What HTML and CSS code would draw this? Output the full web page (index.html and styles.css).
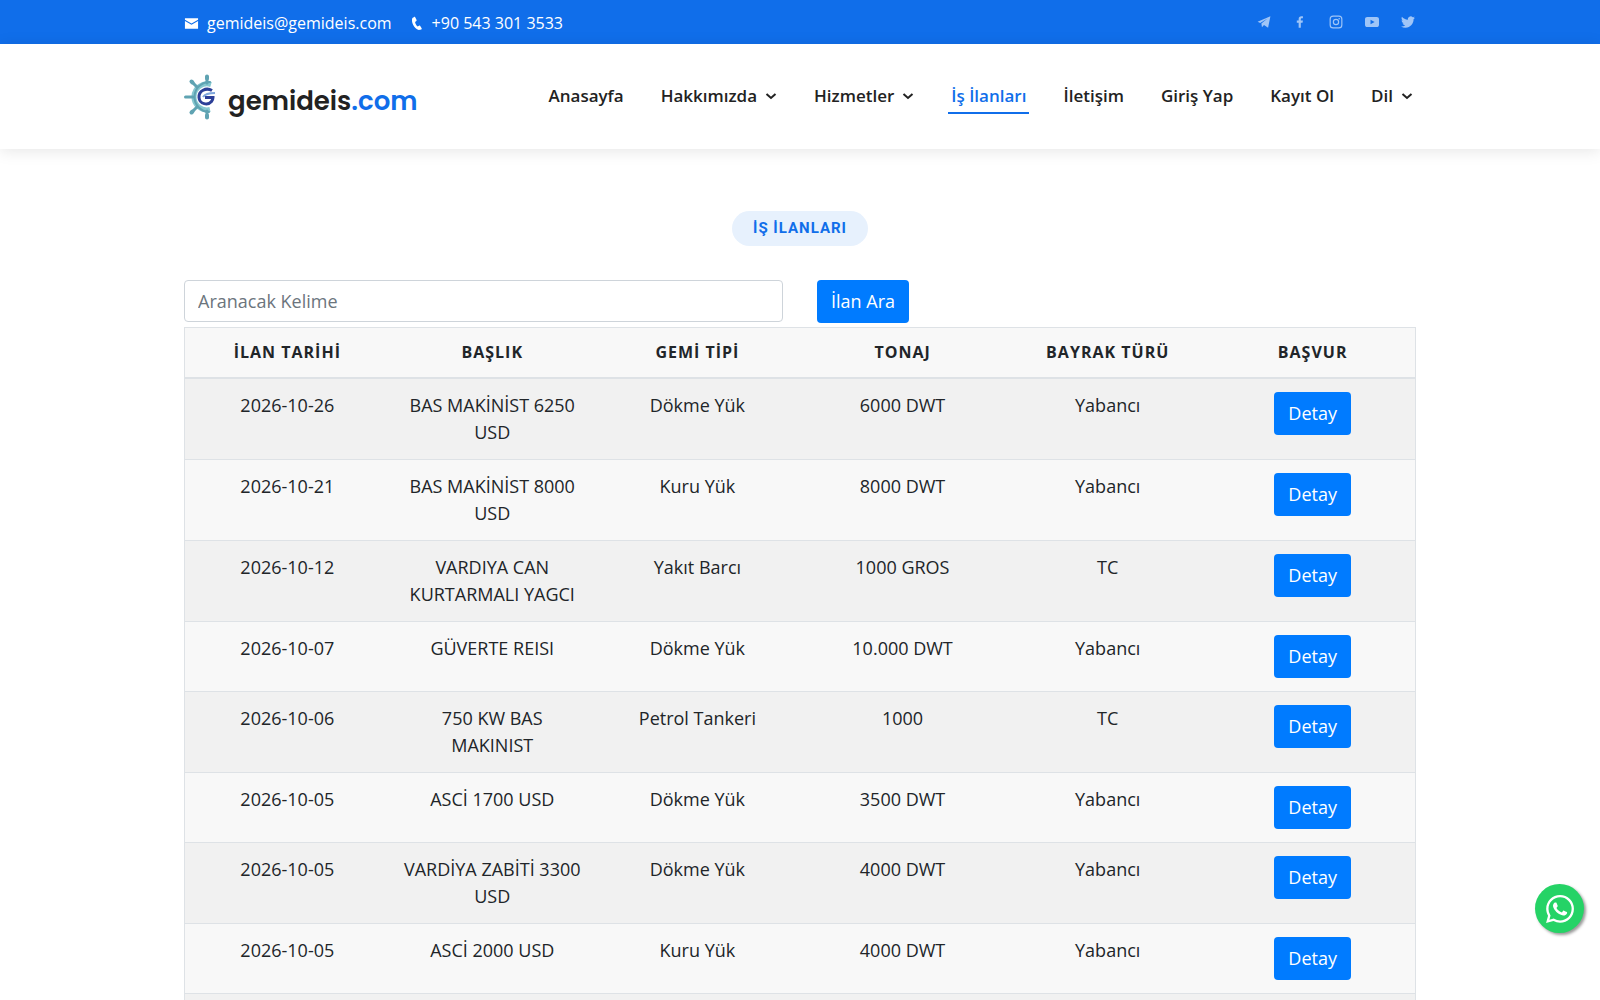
FILE: index.html
```html
<!DOCTYPE html>
<html lang="tr">
<head>
<meta charset="utf-8">
<meta name="viewport" content="width=device-width, initial-scale=1">
<title>İş İlanları</title>
<link rel="stylesheet" href="styles.css">
</head>
<body>
<div class="topbar">
  <div class="container topbar-inner">
    <div class="contact">
      <a href="mailto:gemideis@gemideis.com"><svg class="contact-icon" viewBox="0 0 16 16"><path d="M1 2.500h14v1.500L8 8 1 4zM1 5.300l7 4 7-4v8.200H1z"/></svg>gemideis@gemideis.com</a>
      <a href="tel:+905433013533"><svg class="contact-icon" viewBox="0 0 16 16"><path d="M5.500 1 3.600 2C2 6 5 13 10.500 15l2.600-.7c.5-.3.600-.7.400-1.200l-1.700-2.600c-.3-.4-.7-.4-1.100-.2l-1.600.8C7.600 9.600 6.700 8 6.500 6.300l1.300-1.100c.3-.3.400-.6.300-1L6.600 1.400C6.400 1 6 .8 5.500 1z"/></svg>+90 543 301 3533</a>
    </div>
    <div class="social">
      <a href="#" aria-label="Telegram"><svg viewBox="0 0 24 24"><path d="M1 11.500 23 2l-4 20-7-5-3.500 4-1-6.500L18 6 5.500 13.500z"/></svg></a>
      <a href="#" aria-label="Facebook"><svg viewBox="0 0 24 24"><path d="M13.400 22v-8.800h3l.6-3.700h-3.600V7.300c0-1.200.5-1.900 1.900-1.900H17V2.200C16.600 2.100 15.500 2 14.400 2 11.500 2 9.700 3.700 9.700 6.700v2.800H6.500v3.700h3.200V22z"/></svg></a>
      <a href="#" aria-label="Instagram"><svg viewBox="0 0 24 24"><g fill="none" stroke="currentColor" stroke-width="2"><rect x="2" y="2" width="20" height="20" rx="5"/><circle cx="12" cy="12" r="4.500"/></g><circle cx="17.500" cy="6.500" r="1.400"/></svg></a>
      <a href="#" aria-label="YouTube"><svg viewBox="0 0 24 24"><path fill-rule="evenodd" d="M4 3.500h16c2.500 0 4 1.500 4 4v9c0 2.500-1.500 4-4 4H4c-2.500 0-4-1.500-4-4v-9c0-2.500 1.500-4 4-4zM9.500 8v8l7-4z"/></svg></a>
      <a href="#" aria-label="Twitter"><svg viewBox="0 0 24 24"><path d="M23.950 4.570a10 10 0 0 1-2.820.77 4.960 4.960 0 0 0 2.160-2.720c-.95.55-2 .96-3.130 1.180a4.920 4.920 0 0 0-8.380 4.480C7.690 8.090 4.070 6.130 1.640 3.160a4.820 4.820 0 0 0-.67 2.480c0 1.710.87 3.210 2.190 4.100a4.900 4.900 0 0 1-2.230-.62v.06a4.920 4.920 0 0 0 3.950 4.830 5 5 0 0 1-2.210.08 4.940 4.940 0 0 0 4.600 3.420A9.870 9.870 0 0 1 0 19.540a13.990 13.990 0 0 0 7.550 2.210c9.050 0 14-7.500 14-13.980 0-.21 0-.42-.02-.63a9.940 9.940 0 0 0 2.460-2.550z"/></svg></a>
    </div>
  </div>
</div>
<header class="header">
  <div class="container header-inner">
    <a class="logo" href="#">
      <svg class="logo-mark" viewBox="0 0 32 46">
        <g fill="none" stroke-linecap="round">
          <path stroke-width="5" stroke="#86c8d0" stroke-linecap="butt" d="M27 10.500A13 13 0 1 0 26 35.500"/>
          <g stroke="#5fa3b2">
            <path stroke-width="2" d="M26 8A15 15 0 0 0 25 38"/>
            <path stroke-width="3" d="M23 3v6M8 8l5 5M1.500 23H9M8 38l5-5M23 37v6"/>
            <path stroke-width="4" d="M23 2.500v2M7.500 7.500l1 1M7.500 38.500l1-1M23 43.500v-2"/>
          </g>
        </g>
        <path fill="none" stroke="#2c3f97" stroke-width="3" d="M28 16.500C22 13 14.500 17 15 23.500c.5 7 9 8 12.500 4 1-1.500 1.500-2.500 1.500-4h-8"/>
        <path fill="none" stroke="#7ea6dc" stroke-width="2" d="M19 23c2-3 6-4 12-4"/>
      </svg>
      <span class="logo-text">gemideis<span class="accent">.com</span></span>
    </a>
    <nav class="nav">
      <a href="#">Anasayfa</a>
      <a href="#">Hakkımızda<svg class="chevron" viewBox="0 0 12 12"><path d="m1.500 4 4.500 4 4.500-4"/></svg></a>
      <a href="#">Hizmetler<svg class="chevron" viewBox="0 0 12 12"><path d="m1.500 4 4.500 4 4.500-4"/></svg></a>
      <a href="#" class="active">İş İlanları</a>
      <a href="#">İletişim</a>
      <a href="#">Giriş Yap</a>
      <a href="#">Kayıt Ol</a>
      <a href="#">Dil<svg class="chevron" viewBox="0 0 12 12"><path d="m1.500 4 4.500 4 4.500-4"/></svg></a>
    </nav>
  </div>
</header>
<main class="container jobs">
  <h2 class="badge">İŞ İLANLARI</h2>
  <form class="search">
    <input type="text" class="search-input" placeholder="Aranacak Kelime" aria-label="Aranacak Kelime">
    <button type="button" class="btn">İlan Ara</button>
  </form>
  <table class="table">
    <thead>
      <tr><th>İLAN TARİHİ</th><th>BAŞLIK</th><th>GEMİ TİPİ</th><th>TONAJ</th><th>BAYRAK TÜRÜ</th><th>BAŞVUR</th></tr>
    </thead>
    <tbody>
      <tr><td>2026-10-26</td><td>BAS MAKİNİST 6250 USD</td><td>Dökme Yük</td><td>6000 DWT</td><td>Yabancı</td><td><a href="#" class="btn">Detay</a></td></tr>
      <tr><td>2026-10-21</td><td>BAS MAKİNİST 8000 USD</td><td>Kuru Yük</td><td>8000 DWT</td><td>Yabancı</td><td><a href="#" class="btn">Detay</a></td></tr>
      <tr><td>2026-10-12</td><td>VARDIYA CAN KURTARMALI YAGCI</td><td>Yakıt Barcı</td><td>1000 GROS</td><td>TC</td><td><a href="#" class="btn">Detay</a></td></tr>
      <tr><td>2026-10-07</td><td>GÜVERTE REISI</td><td>Dökme Yük</td><td>10.000 DWT</td><td>Yabancı</td><td><a href="#" class="btn">Detay</a></td></tr>
      <tr><td>2026-10-06</td><td>750 KW BAS MAKINIST</td><td>Petrol Tankeri</td><td>1000</td><td>TC</td><td><a href="#" class="btn">Detay</a></td></tr>
      <tr><td>2026-10-05</td><td>ASCİ 1700 USD</td><td>Dökme Yük</td><td>3500 DWT</td><td>Yabancı</td><td><a href="#" class="btn">Detay</a></td></tr>
      <tr><td>2026-10-05</td><td>VARDİYA ZABİTİ 3300 USD</td><td>Dökme Yük</td><td>4000 DWT</td><td>Yabancı</td><td><a href="#" class="btn">Detay</a></td></tr>
      <tr><td>2026-10-05</td><td>ASCİ 2000 USD</td><td>Kuru Yük</td><td>4000 DWT</td><td>Yabancı</td><td><a href="#" class="btn">Detay</a></td></tr>
      <tr class="tail"><td colspan="6"></td></tr>
    </tbody>
  </table>
</main>
<a class="whatsapp" href="#" aria-label="WhatsApp">
  <svg viewBox="0 0 24 24"><path d="M17.472 14.382c-.297-.149-1.758-.867-2.030-.967-.273-.099-.471-.148-.670.150-.197.297-.767.966-.940 1.164-.173.199-.347.223-.644.075-.297-.150-1.255-.463-2.390-1.475-.883-.788-1.480-1.761-1.653-2.059-.173-.297-.018-.458.130-.606.134-.133.298-.347.446-.520.149-.174.198-.298.298-.497.099-.198.050-.371-.025-.520-.075-.149-.669-1.612-.916-2.207-.242-.579-.487-.500-.669-.510-.173-.008-.371-.010-.570-.010-.198 0-.520.074-.792.372-.272.297-1.040 1.016-1.040 2.479 0 1.462 1.065 2.875 1.213 3.074.149.198 2.096 3.200 5.077 4.487.709.306 1.262.489 1.694.625.712.227 1.360.195 1.871.118.571-.085 1.758-.719 2.006-1.413.248-.694.248-1.289.173-1.413-.074-.124-.272-.198-.570-.347m-5.421 7.403h-.004a9.870 9.870 0 0 1-5.031-1.378l-.361-.214-3.741.982.998-3.648-.235-.374a9.860 9.860 0 0 1-1.510-5.260c.001-5.450 4.436-9.884 9.888-9.884 2.640 0 5.122 1.030 6.988 2.898a9.825 9.825 0 0 1 2.893 6.994c-.003 5.450-4.437 9.884-9.885 9.884m8.413-18.297A11.815 11.815 0 0 0 12.050 0C5.495 0 .160 5.335.157 11.892c0 2.096.547 4.142 1.588 5.945L.057 24l6.305-1.654a11.882 11.882 0 0 0 5.683 1.448h.005c6.554 0 11.890-5.335 11.893-11.893a11.821 11.821 0 0 0-3.480-8.413z"/></svg>
</a>
</body>
</html>
```
FILE: styles.css
```css
* {
  box-sizing: border-box;
}

body {
  margin: 0;
  background: #fff;
  color: #212529;
  font: 18px/27px "Open Sans", sans-serif;
}

a {
  color: inherit;
  text-decoration: none;
}

svg {
  display: block;
  fill: currentColor;
}

.container {
  max-width: 1260px;
  margin: 0 auto;
  padding: 0 14px;
}

.topbar {
  background: #106eea;
  color: #fff;
  font-size: 16px;
}

.topbar-inner {
  display: flex;
  justify-content: space-between;
  align-items: center;
  height: 44px;
}

.contact,
.contact a {
  display: flex;
  align-items: center;
}

.contact {
  gap: 17px;
  padding-top: 2px;
}

.contact a {
  gap: 8px;
}

.contact-icon {
  width: 15px;
  height: 15px;
}

.social {
  display: flex;
  gap: 22px;
  padding-right: 1px;
  color: #9fc5f7;
}

.social svg {
  width: 14px;
  height: 14px;
}

.header {
  background: #fff;
  box-shadow: 0 2px 15px rgba(0, 0, 0, 0.1);
}

.header-inner {
  display: flex;
  justify-content: space-between;
  align-items: center;
  height: 105px;
}

.logo {
  display: flex;
  align-items: center;
  gap: 12px;
}

.logo-mark {
  width: 32px;
  height: 46px;
}

.logo-text {
  padding-top: 8px;
  color: #222;
  font: 600 26px/34px Poppins, Inter, sans-serif;
}

.accent {
  color: #106eea;
}

.nav {
  display: flex;
  gap: 31px;
  color: #222;
  font-size: 17px;
  font-weight: 600;
}

.nav a {
  display: flex;
  align-items: center;
  gap: 8px;
  padding: 3px;
  border-bottom: 2px solid transparent;
}

.nav .active {
  border-color: #106eea;
  color: #106eea;
}

.chevron {
  width: 12px;
  height: 12px;
  fill: none;
  stroke: currentColor;
  stroke-width: 2;
}

.jobs {
  display: flex;
  flex-direction: column;
  padding-top: 62px;
}

.badge {
  align-self: center;
  margin: 0 0 34px;
  padding: 4px 21px;
  border-radius: 50px;
  background: #e7f1fd;
  color: #106eea;
  font: 700 15px/27px Roboto, sans-serif;
  letter-spacing: 1px;
}

.search {
  display: flex;
  align-items: flex-start;
  gap: 34px;
  margin-bottom: 4px;
}

.search-input {
  width: calc(50% - 17px);
  height: 42px;
  padding: 6px 13px;
  border: 1px solid #ced4da;
  border-radius: 4px;
  color: #495057;
  font: inherit;
}

.search-input::placeholder {
  color: #6c757d;
  opacity: 1;
}

.btn {
  display: inline-block;
  height: 43px;
  padding: 8px 14px;
  border: 0;
  border-radius: 4px;
  background: #007bff;
  color: #fff;
  font: inherit;
  vertical-align: top;
}

.table {
  width: 100%;
  border: 1px solid #dee2e6;
  border-collapse: collapse;
  background: #f8f8f8;
  table-layout: fixed;
  text-align: center;
}

.table th {
  height: 50px;
  padding: 11px;
  border-bottom: 2px solid #dee2e6;
  font-size: 16px;
  letter-spacing: 1px;
}

.table td {
  height: 70px;
  padding: 13px;
  border-top: 1px solid #dee2e6;
  vertical-align: top;
}

.table tbody tr:nth-child(odd) {
  background: #f1f1f1;
}

.table .tail td {
  height: 7px;
  padding: 3px;
}

.whatsapp {
  position: fixed;
  right: 16px;
  bottom: 67px;
  display: flex;
  align-items: center;
  justify-content: center;
  width: 49px;
  height: 49px;
  border-radius: 50%;
  background: #25d366;
  box-shadow: 2px 2px 3px #999;
  color: #fff;
}

.whatsapp svg {
  width: 28px;
  height: 28px;
}
```
